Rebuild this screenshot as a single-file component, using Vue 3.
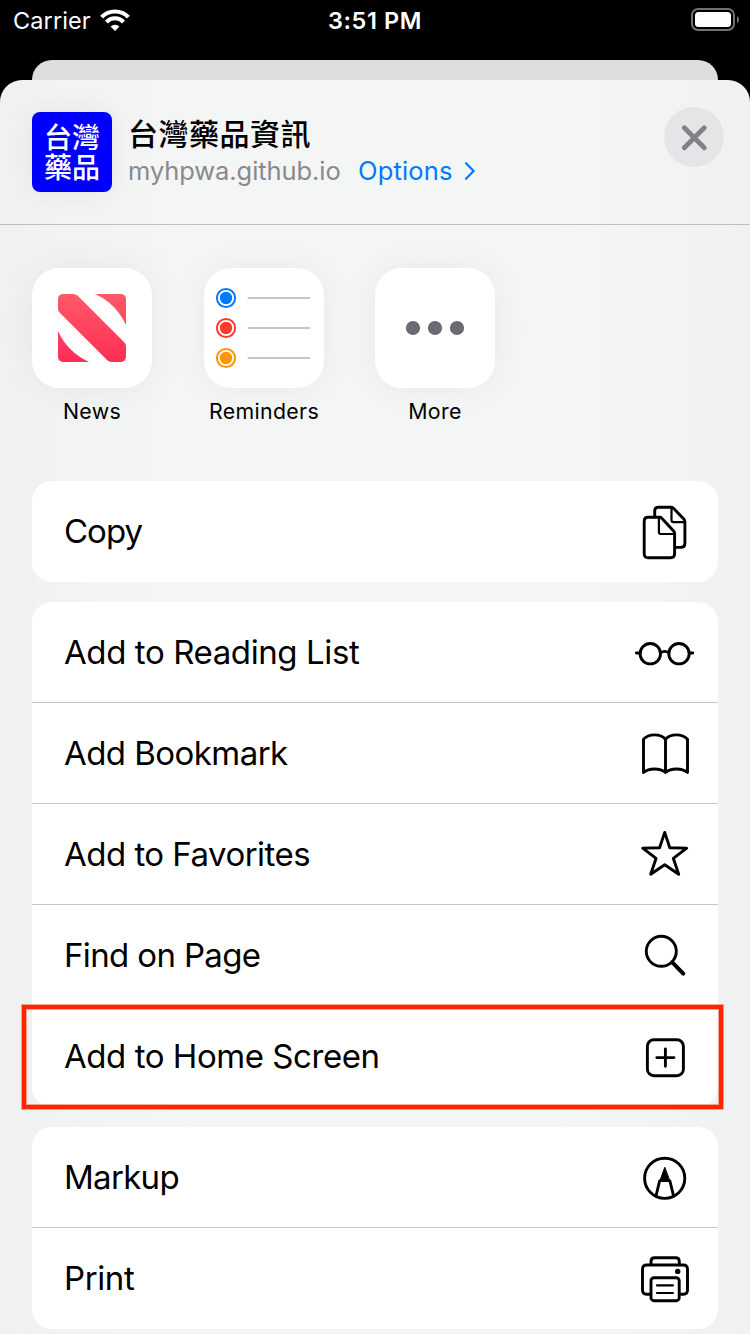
<script setup>
const groups = [
  [{ id: 'copy', label: 'Copy', spacing: '-1px' }],
  [
    { id: 'reading', label: 'Add to Reading List', spacing: '-0.4px' },
    { id: 'bookmark', label: 'Add Bookmark', spacing: '-0.55px' },
    { id: 'favorites', label: 'Add to Favorites', spacing: '-0.52px' },
    { id: 'find', label: 'Find on Page', spacing: '-0.64px' },
    { id: 'home', label: 'Add to Home Screen', spacing: '-0.45px' },
  ],
  [
    { id: 'markup', label: 'Markup', spacing: '-0.7px' },
    { id: 'print', label: 'Print', spacing: '-0.4px' },
  ],
]
const reminders = [
  { y: 30, color: '#007aff' },
  { y: 60, color: '#ff3b30' },
  { y: 90, color: '#ff9500' },
]
</script>

<template>
  <div class="screen">
    <div class="status">
      <span class="carrier">Carrier</span>
      <svg class="wifi" width="30" height="22" viewBox="0 0 30 22">
        <g fill="none" stroke="#fff" stroke-width="4">
          <path d="M1.6 8.1 A18.9 18.9 0 0 1 28.4 8.1" />
          <path d="M6.4 13 A12 12 0 0 1 23.6 13" />
        </g>
        <path d="M15 22 L10.6 17.5 A6.2 6.2 0 0 1 19.4 17.5 Z" fill="#fff" />
      </svg>
      <span class="time">3:51 PM</span>
      <svg class="battery" width="48" height="24" viewBox="0 0 48 24">
        <rect x="1" y="1" width="42" height="21" rx="6" fill="none" stroke="#717171" stroke-width="2" />
        <rect x="4" y="4" width="36" height="15" rx="3.5" fill="#fff" />
        <path d="M46 8 Q48 9 48 11.5 Q48 14 46 15 Z" fill="#717171" />
      </svg>
    </div>
    <div class="behind"></div>
    <div class="sheet">
      <header class="head">
        <div class="appicon">台灣<br />藥品</div>
        <div class="info">
          <div class="title">台灣藥品資訊</div>
          <div class="sub">
            <span class="domain">myhpwa.github.io</span>
            <span class="options">Options</span>
            <svg class="chev" width="12" height="20" viewBox="0 0 12 20">
              <path d="M2 3.200 L9.6 11 L2 18.800" fill="none" stroke="#007aff" stroke-width="2.2" stroke-linecap="round" stroke-linejoin="round" />
            </svg>
          </div>
        </div>
        <div class="close">
          <svg width="60" height="60" viewBox="0 0 60 60">
            <path d="M20.3 20.700 L40.3 40.700 M40.3 20.700 L20.3 40.700" stroke="#808184" stroke-width="4.8" stroke-linecap="round" />
          </svg>
        </div>
      </header>

      <div class="apps">
        <div class="app">
          <div class="tile">
            <svg width="120" height="120" viewBox="-26 -26 120 120">
              <defs>
                <linearGradient id="news" x1="0" y1="0" x2="0" y2="68" gradientUnits="userSpaceOnUse">
                  <stop offset="0" stop-color="#ff5a68" />
                  <stop offset="1" stop-color="#ff2d55" />
                </linearGradient>
                <clipPath id="square"><rect width="68" height="68" rx="5" /></clipPath>
              </defs>
              <g fill="url(#news)" clip-path="url(#square)">
                <path d="M0 0 H15 Q18 0 20 2 L66 48 Q68 50 68 52 V68 H53.500 Q51 68 49 66 L2 19 Q0 17 0 15 Z" />
                <path d="M37 0 H68 V31 Q58 9.500 37 0 Z" />
                <path d="M0 37 Q9.500 58 31 68 H0 Z" />
              </g>
            </svg>
          </div>
          <span class="name">News</span>
        </div>
        <div class="app">
          <div class="tile">
            <svg width="120" height="120" viewBox="0 0 120 120">
              <g v-for="r in reminders" :key="r.y">
                <circle cx="22" :cy="r.y" r="9.100" fill="none" :stroke="r.color" stroke-width="2" />
                <circle cx="22" :cy="r.y" r="6.200" :fill="r.color" />
                <path :d="`M44.500 ${r.y} H105.500`" stroke="#c6c6cc" stroke-width="2" stroke-linecap="round" />
              </g>
            </svg>
          </div>
          <span class="name">Reminders</span>
        </div>
        <div class="app">
          <div class="tile">
            <svg width="120" height="120" viewBox="0 0 120 120" fill="#6b6a73">
              <circle cx="38" cy="60" r="7.100" />
              <circle cx="60" cy="60" r="7.100" />
              <circle cx="82" cy="60" r="7.100" />
            </svg>
          </div>
          <span class="name">More</span>
        </div>
      </div>

      <div class="groups">
        <div v-for="(g, i) in groups" :key="i" class="group">
          <div v-for="item in g" :key="item.id" class="row" :class="{ marked: item.id === 'home' }">
            <span class="label" :style="{ letterSpacing: item.spacing }">{{ item.label }}</span>
            <svg class="icon" width="62" height="100" viewBox="0 0 62 100">
              <template v-if="item.id === 'copy'">
                <path d="M26.500 36.300 H14.200 Q10.200 36.300 10.200 40.300 V72.700 Q10.200 76.700 14.200 76.700 H36.800 Q40.600 76.700 40.600 72.700 V52.300 Q40.600 51 39.600 50 L28 37.400 Q27.200 36.300 25.500 36.300" />
                <path d="M20.700 36 V30 Q20.700 26.200 24.500 26.200 H36.500 Q38.400 26.200 39.400 27.200 L49.800 38 Q50.900 39.200 50.900 41 V62.500 Q50.900 66.400 47 66.400 H41" />
                <path class="thin" d="M24.900 37 V51 Q24.900 53 27 53 H40 M37.500 27 V39 Q37.500 41.100 39.600 41.100 H50.500" />
              </template>
              <template v-else-if="item.id === 'reading'">
                <circle cx="16.300" cy="51.700" r="10.200" />
                <circle cx="45" cy="51.700" r="10.200" />
                <path d="M2.400 51 H6 M55.200 51 H58.800 M26.500 50.800 Q30.700 48 34.900 50.800" />
              </template>
              <template v-else-if="item.id === 'bookmark'">
                <path d="M9.500 69.500 V36.300 Q13.500 31.900 20.500 31.900 Q28 31.900 31.500 36.300 Q35 31.900 42.500 31.900 Q49.500 31.900 53.500 36.300 V69.500 Q49.500 66 42.500 66 Q35.500 66 31.500 69.500 Q27.500 66 20.500 66 Q13.500 66 9.500 69.500 Z M31.500 36.300 V69.500" />
              </template>
              <template v-else-if="item.id === 'favorites'">
                <path d="M30.700 28.400 L35.800 43.800 L52.700 44.100 L39.300 54.300 L44.700 70.300 L30.700 60.700 L16.700 70.300 L22.100 54.300 L8.700 44.100 L25.600 43.800 Z" />
              </template>
              <template v-else-if="item.id === 'find'">
                <circle cx="27.300" cy="46.300" r="15" />
                <path class="thick" d="M38.300 57.300 L49.300 68.600" />
              </template>
              <template v-else-if="item.id === 'home'">
                <rect x="13.400" y="33.700" width="36" height="36" rx="6.500" />
                <path d="M31.400 43 V60.300 M22.800 51.600 H40" />
              </template>
              <template v-else-if="item.id === 'markup'">
                <circle cx="30.700" cy="51.300" r="20.100" />
                <path d="M30.700 40.600 L25.600 54.500 H35.800 Z" fill="#000" stroke-width="1" />
                <path d="M25.600 54 L22 69 M35.900 54 L39.600 69" />
              </template>
              <template v-else>
                <path d="M17 36.500 V33.400 Q17 29.700 20.700 29.700 H41.600 Q45.300 29.700 45.300 33.400 V36.500 M16.500 66.200 H12.500 Q8.500 66.200 8.500 62 V41.200 Q8.500 37 12.700 37 H49.300 Q53.500 37 53.500 41.200 V62 Q53.500 66.200 49.500 66.200 H45.500" />
                <rect x="17" y="49.700" width="28.200" height="23" rx="3" />
                <path class="thin" d="M23 57.400 H38.900 M23 65 H38.900" />
                <circle cx="43.700" cy="43.400" r="2.700" fill="#000" stroke="none" />
              </template>
            </svg>
          </div>
        </div>
      </div>
    </div>
  </div>
</template>

<style>
body {
  background: #000;
}
</style>

<style scoped>
.screen {
  width: 750px;
  height: 1334px;
  overflow: hidden;
  background: #000;
  color: #000;
  font-family: Inter, "Liberation Sans", "Noto Sans CJK TC", sans-serif;
}
svg {
  display: block;
  flex: none;
}
.status {
  display: grid;
  grid-template-columns: 100px 550px 41px 59px;
  height: 60px;
  color: #fff;
  font-size: 23.5px;
  line-height: 42px;
  white-space: nowrap;
}
.carrier {
  padding-left: 13px;
  letter-spacing: 0.1px;
}
.wifi {
  margin-top: 9px;
  grid-area: 1 / 2;
}
.time {
  grid-area: 1 / 2;
  text-align: center;
  font-weight: 600;
  letter-spacing: 0.6px;
}
.battery {
  grid-column: 4;
  margin-top: 8px;
}
.behind {
  height: 20px;
  margin: 0 32px;
  border-radius: 20px 20px 0 0;
  background: #dddfde;
}
.sheet {
  height: 1254px;
  border-radius: 22px 22px 0 0;
  background: linear-gradient(90deg, #f0f2f1, #f4f5f5 25%, #f4f5f5 75%, #f0f1f1);
}
.head {
  box-sizing: border-box;
  height: 145px;
  padding: 32px 26px 0 32px;
  border-bottom: 1px solid #bebfc0;
  display: flex;
}
.appicon {
  width: 80px;
  height: 80px;
  box-sizing: border-box;
  padding: 9px 0 0 12px;
  border-radius: 8px;
  background: #00f;
  color: #fff;
  font: 500 28px/30px "Noto Sans CJK TC", sans-serif;
  white-space: nowrap;
  box-shadow: 0 0 30px rgba(0, 0, 0, 0.06);
}
.info {
  flex: 1;
  padding-left: 16px;
}
.title {
  height: 40px;
  font: 500 30px/40px "Noto Sans CJK TC", sans-serif;
  letter-spacing: 0.5px;
}
.sub {
  display: flex;
  align-items: center;
  height: 36px;
  font-size: 25.5px;
}
.domain {
  width: 230px;
  color: #8a8a8e;
  letter-spacing: -0.08px;
}
.options {
  width: 106px;
  color: #007aff;
  letter-spacing: 0.15px;
}
.close {
  width: 60px;
  height: 60px;
  margin-top: -5px;
  border-radius: 50%;
  background: #e4e5e6;
}
.apps {
  display: flex;
  padding: 43px 32px 0;
  height: 213px;
}
.app {
  width: 120px;
  margin-right: 52px;
  display: flex;
  flex-direction: column;
  align-items: center;
}
.app + .app {
  margin-right: 51px;
}
.tile {
  width: 120px;
  height: 120px;
  border-radius: 27px;
  background: #fff;
  box-shadow: 0 0 36px rgba(0, 0, 0, 0.055);
}
.name {
  margin-top: 7px;
  font-size: 21.3px;
  line-height: 32px;
  letter-spacing: 0.35px;
}
.groups {
  display: flex;
  flex-direction: column;
  gap: 20px;
  padding: 0 32px;
}
.group {
  border-radius: 20px;
  background: #fff;
}
.row {
  position: relative;
  box-sizing: border-box;
  height: 101px;
  padding: 0 22px 0 32px;
  display: flex;
  justify-content: space-between;
  border-bottom: 1px solid #c5c5c7;
}
.row:last-child {
  border-bottom-color: transparent;
}
.label {
  font-size: 33px;
  line-height: 101px;
  white-space: nowrap;
}
.icon {
  fill: none;
  stroke: #000;
  stroke-width: 2.9px;
  stroke-linecap: round;
  stroke-linejoin: round;
}
.thin {
  stroke-width: 2.2px;
}
.thick {
  stroke-width: 4px;
}
/* highlight frame around the home screen action */
.marked::after {
  content: "";
  position: absolute;
  left: -10px;
  top: -1px;
  width: 693px;
  height: 96px;
  border: 4px solid #ff2600;
  box-shadow: 0 0 0 1px rgba(255, 38, 0, 0.4), inset 0 0 0 1px rgba(255, 38, 0, 0.4);
}
</style>
